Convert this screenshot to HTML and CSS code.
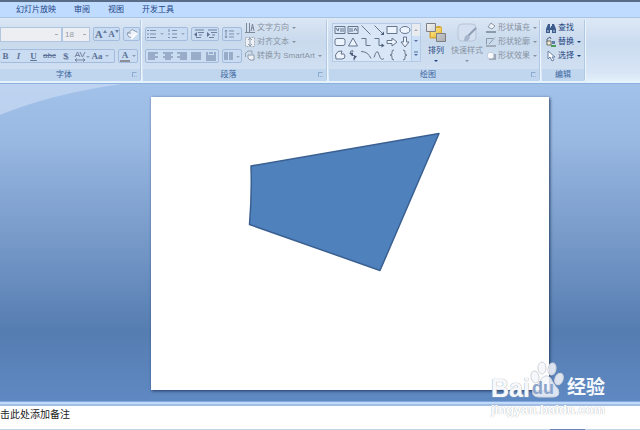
FILE: index.html
```html
<!DOCTYPE html>
<html lang="zh-CN">
<head>
<meta charset="utf-8">
<title>演示文稿</title>
<link rel="stylesheet" href="styles.css">
</head>
<body>
<div class="app">
  <nav class="tabs">
    <a href="#show">幻灯片放映</a>
    <a href="#review">审阅</a>
    <a href="#view">视图</a>
    <a href="#dev">开发工具</a>
  </nav>

  <div class="ribbon">
    <section class="group group-font">
      <div class="body rows">
        <div class="row">
          <div class="fields">
            <select class="font-name" aria-label="字体"><option></option></select>
            <select class="font-size" aria-label="字号"><option>18</option></select>
          </div>
          <div class="pill w28">
            <button class="serif big" aria-label="增大字号">A<svg width="4" height="8" viewBox="0 0 4 8"><path d="M0 3 2 0l2 3z" fill="#6b82a8"/></svg></button>
            <button class="serif" aria-label="减小字号">A<svg width="4" height="8" viewBox="0 0 4 8"><path d="M0 0h4L2 3z" fill="#6b82a8"/></svg></button>
          </div>
          <div class="pill w17">
            <button aria-label="清除格式"><svg width="14" height="12" viewBox="0 0 14 12"><path d="M2 6 7 1.500 12 4 8 10 4 9Z" fill="#eef3fa" stroke="#8c9bb5"/><path d="M6 11 12 5" stroke="#fff" stroke-width="2"/><path d="M2 5h4" stroke="#8292b0"/></svg></button>
          </div>
        </div>
        <div class="row">
          <div class="pill pill-left">
            <button class="serif w11">B</button>
            <button class="serif w15 italic">I</button>
            <button class="serif w15 under">U</button>
            <button class="w17 strike">abc</button>
            <button class="serif w15 shade">S</button>
            <button class="w17 spacing" aria-label="字符间距"><svg width="16" height="11" viewBox="0 0 16 11"><path d="M1 6 3.500 1 6 6M2 4.500h3M6 1 8.500 6 11 1M1 9h10M3 7.500 1 9l2 1.500M9 7.500 11 9 9 10.500" fill="none" stroke="#7384a4"/><path d="M12 5h4l-2 2z" fill="#8fa0bb"/></svg></button>
            <button class="serif w20">Aa<i class="caret"></i></button>
          </div>
          <div class="pill w20">
            <button class="serif color" aria-label="字体颜色"><b>A</b><i class="caret"></i></button>
          </div>
        </div>
      </div>
      <h2>字体<i class="launch"></i></h2>
    </section>

    <section class="group group-para">
      <div class="body para">
        <div class="rows">
          <div class="row">
            <div class="pill w43">
              <button aria-label="项目符号"><svg width="20" height="10" viewBox="0 0 20 10"><path d="M1 1.500h2M1 5h2M1 8.500h2M4 1.500h6M4 5h6M4 8.500h6" stroke="#7b8ead"/><path d="M14 4h4l-2 2z" fill="#9aa9c2"/></svg></button>
              <button aria-label="编号"><svg width="20" height="10" viewBox="0 0 20 10"><path d="M2 0v3M1 5h2M1 8.500h2M5 1.500h5M5 5h5M5 8.500h5" stroke="#7b8ead"/><path d="M14 4h4l-2 2z" fill="#9aa9c2"/></svg></button>
            </div>
            <div class="pill w28">
              <button aria-label="减少缩进"><svg width="12" height="10" viewBox="0 0 12 10"><path d="M2 1h9M5 3.500h6M6 6h3M3 8.500h5" stroke="#6e809f"/><path d="M4 3 1 5.500 4 8z" fill="#5d7193"/></svg></button>
              <button aria-label="增加缩进"><svg width="12" height="10" viewBox="0 0 12 10"><path d="M2 1h9M5 3.500h6M6 6h3M3 8.500h5" stroke="#6e809f"/><path d="M1 3 4 5.500 1 8z" fill="#5d7193"/></svg></button>
            </div>
            <div class="pill w20">
              <button aria-label="行距"><svg width="16" height="10" viewBox="0 0 16 10"><path d="M5 2h5M5 5h5M5 8h5M2 1v8M1 2.500 2 1 3 2.500M1 7.500 2 9 3 7.500" fill="none" stroke="#7b8ead"/><path d="M12 4h4l-2 2z" fill="#9aa9c2"/></svg></button>
            </div>
          </div>
          <div class="row">
            <div class="pill w74">
              <button aria-label="左对齐"><svg width="10" height="9" viewBox="0 0 10 9"><path d="M0 1h10M0 3h7M0 5h10M0 7h7" stroke="#687ca0"/></svg></button>
              <button aria-label="居中"><svg width="10" height="9" viewBox="0 0 10 9"><path d="M0 1h10M2 3h6M0 5h10M2 7h6" stroke="#687ca0"/></svg></button>
              <button aria-label="右对齐"><svg width="10" height="9" viewBox="0 0 10 9"><path d="M0 1h10M3 3h7M0 5h10M3 7h7" stroke="#687ca0"/></svg></button>
              <button aria-label="两端对齐"><svg width="10" height="9" viewBox="0 0 10 9"><path d="M0 1h10M0 3h10M0 5h10M0 7h10" stroke="#687ca0"/></svg></button>
              <button aria-label="分散对齐"><svg width="10" height="9" viewBox="0 0 10 9"><path d="M1 0v3M9 0v3M3 1h4M0 4h10M0 6h10M0 8h10" stroke="#687ca0"/></svg></button>
            </div>
            <div class="pill w20">
              <button aria-label="分栏"><svg width="16" height="9" viewBox="0 0 16 9"><path d="M0 1h4M0 3h4M0 5h4M0 7h4M5 1h4M5 3h4M5 5h4M5 7h4" stroke="#687ca0"/><path d="M12 4h4l-2 2z" fill="#9aa9c2"/></svg></button>
            </div>
          </div>
        </div>
        <div class="stack off">
          <button><svg width="10" height="12" viewBox="0 0 10 12"><path d="M1.500 1v9M4.500 1v9M0 10.500h10" stroke="#7c8797"/><path d="M6 9 7.500 2 9 9M6 6h3" fill="none" stroke="#7c8797"/></svg>文字方向<i class="caret"></i></button>
          <button><svg width="10" height="12" viewBox="0 0 10 12"><path d="M.5 1.500h9v9h-9z" fill="#eef2f7" stroke="#a3adba" stroke-dasharray="2 1"/><path d="M5 2v8M3 4 5 2 7 4M3 8 5 10 7 8" fill="none" stroke="#929dac"/></svg>对齐文本<i class="caret"></i></button>
          <button><svg width="10" height="12" viewBox="0 0 10 12"><path d="M1 3 3 1h4v3M.5 3v4" fill="none" stroke="#98a3b2"/><path d="M3 5h6v5H5L3 8z" fill="#f2f4f8" stroke="#8c98a8"/></svg>转换为 SmartArt<i class="caret"></i></button>
        </div>
      </div>
      <h2>段落<i class="launch"></i></h2>
    </section>

    <section class="group group-draw">
      <div class="body draw">
        <div class="gallery">
          <div class="shapes">
            <button aria-label="文本框"><svg viewBox="0 0 12 12"><path d="M1 2.500h10v7H1z"/><path d="M2 4 4 7 5 4M6 5h4M6 7h4" /></svg></button>
            <button aria-label="垂直文本框"><svg viewBox="0 0 12 12"><path d="M1 2.500h10v7H1z"/><path d="M3 4v4M5 4v4M7 7 8.500 4 10 7"/></svg></button>
            <button aria-label="直线"><svg viewBox="0 0 12 12"><path d="M1.500 1.500 10.500 10.500"/></svg></button>
            <button aria-label="箭头"><svg viewBox="0 0 12 12"><path d="M1.500 1.500 10 10"/><path class="solid" d="M11 11V7.500L7.500 11z"/></svg></button>
            <button aria-label="矩形"><svg viewBox="0 0 12 12"><path class="fill" d="M1 2.500h10v7H1z"/></svg></button>
            <button aria-label="椭圆"><svg viewBox="0 0 12 12"><ellipse class="fill" cx="6" cy="6" rx="5" ry="3.500"/></svg></button>
            <button aria-label="圆角矩形"><svg viewBox="0 0 12 12"><rect class="fill" x="1" y="2.500" width="10" height="7" rx="2"/></svg></button>
            <button aria-label="三角形"><svg viewBox="0 0 12 12"><path class="fill" d="M6 2 10.500 10h-9z"/></svg></button>
            <button aria-label="肘形连接符"><svg viewBox="0 0 12 12"><path d="M1.500 2.500H6v7h4.500"/></svg></button>
            <button aria-label="肘形箭头"><svg viewBox="0 0 12 12"><path d="M1.500 2.500H6v7h4"/><path class="solid" d="M11.500 9.500 8.500 7.500v4z"/></svg></button>
            <button aria-label="右箭头"><svg viewBox="0 0 12 12"><path class="fill" d="M1 4.500h5V2l5 4-5 4V7.500H1z"/></svg></button>
            <button aria-label="下箭头"><svg viewBox="0 0 12 12"><path class="fill" d="M4.500 1v5H2l4 5 4-5H7.500V1z"/></svg></button>
            <button aria-label="任意多边形"><svg viewBox="0 0 12 12"><path class="fill" d="M2 10 1.500 6 4 2.500 8 2 7 5q4-1 4 2t-3 3z"/></svg></button>
            <button aria-label="自由曲线"><svg viewBox="0 0 12 12"><path d="M3 2.500q5-2 2 1t2 3q3 0 0 2l0 3M3 3l3 4"/><path class="solid" d="M2 4h4v3zM7 7h3L7 11z"/></svg></button>
            <button aria-label="弧形"><svg viewBox="0 0 12 12"><path d="M1 2.500q7 0 10 7"/></svg></button>
            <button aria-label="曲线"><svg viewBox="0 0 12 12"><path d="M1 8.500q3-10 5-3t5 4"/></svg></button>
            <button aria-label="左大括号"><svg viewBox="0 0 12 12"><path d="M8 1Q5.500 1 6 3.500T4 6q2.500 0 2 2.500T8 11"/></svg></button>
            <button aria-label="右大括号"><svg viewBox="0 0 12 12"><path d="M4 1q2.500 0 2 2.500T8 6q-2.500 0-2 2.500T4 11"/></svg></button>
          </div>
          <div class="scroller">
            <button aria-label="上一行"><svg width="6" height="4" viewBox="0 0 6 4"><path d="M1 3h4L3 1z" fill="#a6aebb"/></svg></button>
            <button aria-label="下一行"><svg width="6" height="4" viewBox="0 0 6 4"><path d="M1 1h4L3 3z" fill="#526f9e"/></svg></button>
            <button aria-label="其他"><svg width="6" height="6" viewBox="0 0 6 6"><path d="M1 1h4" stroke="#526f9e"/><path d="M1 3h4L3 5z" fill="#526f9e"/></svg></button>
          </div>
        </div>
        <button class="large arrange">
          <svg width="22" height="20" viewBox="0 0 22 20"><defs><linearGradient id="grey" x2="1" y2="1"><stop stop-color="#f4f4f4"/><stop offset="1" stop-color="#a9abae"/></linearGradient><linearGradient id="gold" x2="1" y2="1"><stop stop-color="#fff09c"/><stop offset="1" stop-color="#e9b52c"/></linearGradient></defs><path d="M11.500 3.500h4v4M5 9v6h6" fill="url(#gold)" stroke="#d5a433"/><path d="M5.500 4.500h11v10h-11z" fill="url(#gold)" stroke="#d8aa3c"/><path d="M1.500.5h9v8h-9zM11.500 10.500h9v8h-9z" fill="url(#grey)" stroke="#7d7f84"/></svg>
          <span>排列</span><i class="caret"></i>
        </button>
        <button class="large off">
          <svg width="22" height="20" viewBox="0 0 22 20"><rect x="2" y="1" width="18" height="17" rx="4" fill="#d4e0f0" stroke="#b6c5da"/><path d="M20 5 11 14" stroke="#8d9db6" stroke-width="2"/><path d="M12 12q-4 0-4 6 5 1 6-4z" fill="#a7b6cc"/></svg>
          <span>快速样式</span><i class="caret"></i>
        </button>
        <div class="stack off">
          <button><svg width="10" height="12" viewBox="0 0 10 12"><path d="M2 5 5 1 9 4 6 7z" fill="#eef1f5" stroke="#8d98a8"/><path d="M0 9h10v2H0z" fill="#8e9aaa"/></svg>形状填充<i class="caret"></i></button>
          <button><svg width="10" height="12" viewBox="0 0 10 12"><path d="M7 2.500H.5v6M3 8 9 1.500" fill="none" stroke="#8d98a8"/><path d="M0 9h10v2H0z" fill="#a2adba"/></svg>形状轮廓<i class="caret"></i></button>
          <button><svg width="10" height="12" viewBox="0 0 10 12"><path d="M3 9h6V4" fill="none" stroke="#9ba6b7" stroke-width="2"/><rect x="1.500" y="2.500" width="6" height="6" rx="2" fill="#f8fafc" stroke="#c2cbd7"/></svg>形状效果<i class="caret"></i></button>
        </div>
      </div>
      <h2>绘图<i class="launch"></i></h2>
    </section>

    <section class="group group-edit">
      <div class="body edit">
        <div class="stack">
          <button><svg width="10" height="12" viewBox="0 0 10 12"><path d="M2 2h2v3l1 1V4h1V2h2l2 5v4H6V8H4v3H0V7z" fill="#3d5c8e"/><path d="M1 9h2M7 9h2" stroke="#c4d5eb"/></svg>查找</button>
          <button><svg width="10" height="12" viewBox="0 0 10 12"><path d="M1 6V3l3-2 1 2" fill="none" stroke="#55677e"/><path d="M1 5h4v4H1z" fill="#f3edda" stroke="#716f61"/><path d="M6 5h3v3H6z" fill="#617ca9"/><path d="M5 9h5v2H5z" fill="#4d9b5c"/></svg>替换<i class="caret"></i></button>
          <button><svg width="10" height="12" viewBox="0 0 10 12"><path d="M2 1v8l2-2 2 4 2-1-2-3h3z" fill="#fff" stroke="#6880a5"/></svg>选择<i class="caret"></i></button>
        </div>
      </div>
      <h2>编辑</h2>
    </section>
  </div>

  <main class="workspace">
    <svg class="sheen" viewBox="0 0 120 31" preserveAspectRatio="none" aria-hidden="true"><path d="M0 0h120Q50 10 0 31z" fill="#d3e1f6" fill-opacity=".55"/></svg>
    <div class="slide">
      <svg viewBox="0 0 398 293" role="img" aria-label="四边形"><path d="M100 69 288 36.500 229 173.500 98.500 127.500Q101 98 100 69Z" fill="#4f81bd" stroke="#3a6091" stroke-width="1.500" stroke-linejoin="round"/></svg>
    </div>
  </main>
  <div class="splitter"></div>
  <div class="notes">击此处添加备注</div>
  <div class="status"><span></span></div>

  <div class="watermark">
    <svg class="paw" width="36" height="40" viewBox="0 0 36 40" aria-hidden="true"><g fill="#f4f6fa" fill-opacity=".85" stroke="#d0d4da"><ellipse cx="6" cy="16" rx="4" ry="6" transform="rotate(-12 6 16)"/><ellipse cx="13" cy="7" rx="4" ry="6"/><ellipse cx="23" cy="8" rx="4" ry="6" transform="rotate(10 23 8)"/><ellipse cx="30" cy="18" rx="4" ry="6" transform="rotate(22 30 18)"/><path d="M16 15q5-1 7 5 3 5 6 8 3 8-5 8H10q-8 0-6-8 2-3 6-6 2-6 6-7z"/></g></svg>
    <div class="brand"><span>Bai</span><span class="du">du</span><span class="cn">经验</span></div>
    <div class="url">jingyan.baidu.com</div>
  </div>
</div>
</body>
</html>
```
FILE: styles.css
```css
* { box-sizing: border-box; }

body {
  margin: 0;
  font: 8px/12px "Liberation Sans", "Noto Sans CJK SC", sans-serif;
  color: #1f457f;
}

button, select {
  font: inherit;
  color: inherit;
  border: 0;
  padding: 0;
  margin: 0;
  background: none;
}

svg { display: block; flex: none; }

.app {
  position: relative;
  display: flex;
  flex-direction: column;
  min-height: 100vh;
  overflow: hidden;
}

.tabs {
  display: flex;
  gap: 18px;
  height: 17px;
  padding: 2px 16px 0;
  border-top: 2px solid #586c88;
  background: #bfdbff;
}

.tabs a { color: #1c4586; text-decoration: none; }

/* Ribbon */
.ribbon {
  display: flex;
  gap: 2px;
  height: 67px;
  padding: 2px 0;
  border-top: 1px solid #a9c3e3;
  border-bottom: 1px solid #8cb0df;
  background: linear-gradient(#dce8f6, #cbdcf0 40%, #d8e6f6 85%, #e6f4fd);
}

.group {
  display: flex;
  flex-direction: column;
  flex: none;
  border-right: 1px solid #afc8e4;
  border-radius: 0 0 2px 2px;
  background: linear-gradient(#d9e5f3, #c9daed 35%, #d3e2f3);
  box-shadow: 1px 0 #eef5fd;
}

.group-font { width: 141px; }
.group-para { width: 184px; }
.group-draw { width: 211px; }
.group-edit { width: 43px; }

.group h2 {
  position: relative;
  margin: 0;
  padding-right: 12px;
  font: inherit;
  text-align: center;
  color: #3d659f;
  background: #bfd6ee;
}

.group-edit h2 { padding-right: 0; }

.launch {
  position: absolute;
  right: 3px;
  top: 3px;
  width: 5px;
  height: 5px;
  border: 1px solid #8ca9ce;
  border-right-color: transparent;
  border-bottom-style: dotted;
}

.body { flex: 1; }

.rows {
  display: flex;
  flex-direction: column;
  gap: 8px;
  padding-top: 7px;
}

.row { display: flex; gap: 3px; height: 14px; }

.pill {
  display: flex;
  align-items: center;
  justify-content: space-around;
  border: 1px solid #a3bcdd;
  border-radius: 2px;
  background: #c9dcf1;
}

.pill button { display: flex; align-items: center; justify-content: center; }
.pill-left { justify-content: flex-start; width: 115px; border-left: 0; }

.fields { display: flex; width: 90px; }

.fields select {
  appearance: none;
  height: 15px;
  border: 1px solid #b0c5df;
  color: #949ba5;
  background: #eceef1 linear-gradient(#a1a9b4, #a1a9b4) no-repeat right 3px center / 3px 1px;
}

.font-name { width: 62px; }
.font-size { width: 28px; padding-left: 2px; }

.serif { font-family: "Liberation Serif", serif; font-weight: bold; font-size: 9px; color: #5c7196; }
.big { font-size: 11px; }
.italic { font-style: italic; }
.under { text-decoration: underline; }
.strike { text-decoration: line-through; color: #5c7196; }
.shade { text-shadow: 1px 1px #8ca0c0; }
.color b { line-height: 9px; border-bottom: 2px solid #8d8d98; padding: 0 2px; }

.w11 { width: 11px; }
.w15 { width: 15px; }
.w17 { width: 17px; }
.w20 { width: 20px; }
.w28 { width: 28px; }
.w43 { width: 43px; }
.w74 { width: 74px; }

.caret {
  flex: none;
  width: 0;
  border: 2px solid transparent;
  border-top-color: currentColor;
  border-bottom: 0;
  margin-left: 3px;
}

.serif .caret { margin-left: 2px; opacity: .6; }

.para { display: flex; gap: 3px; padding-left: 2px; }
.draw { display: flex; padding-left: 3px; }
.edit { padding-left: 4px; }

.stack { padding-top: 1px; }

.stack button {
  display: flex;
  align-items: center;
  gap: 2px;
  height: 14px;
  white-space: nowrap;
}

.stack .caret { margin-left: 1px; }

.off { color: #8792a2; }

/* Shape gallery */
.gallery {
  display: flex;
  height: 39px;
  margin-top: 3px;
  border: 1px solid #b5cae5;
  background: #d8e6f7;
}

.shapes { display: grid; grid-template-columns: repeat(6, 13px); }
.shapes button { display: grid; place-items: center; }
.shapes svg { width: 12px; height: 12px; fill: none; stroke: #65758c; }
.shapes .fill { fill: #edf4fd; }
.shapes .solid { fill: #4a5c77; stroke: none; }

.scroller { display: grid; width: 9px; border-left: 1px solid #b5cae5; }
.scroller button { display: grid; place-items: center; background: #cbdff6; }
.scroller button:first-child { background: #e9ebee; }

.large {
  display: flex;
  flex-direction: column;
  align-items: center;
  width: 32px;
  padding-top: 3px;
}

.large span { margin: 2px 0 3px; white-space: nowrap; }
.large .caret { margin: 0; }
.arrange { width: 30px; }
.draw .stack { margin-left: 3px; }

/* Editing area */
.workspace {
  position: relative;
  flex: 1;
  padding: 13px 91px 11px 151px;
  background: linear-gradient(#a3c2ea, #99b8e2 18%, #567db1 78%, #5f89c3);
}

.sheen { position: absolute; left: 0; top: 0; width: 19%; height: 31px; }

.slide { background: #fff; box-shadow: 1px 1px 3px #233d63; }
.slide svg { width: 100%; height: auto; }

.splitter {
  height: 5px;
  border-top: 1px solid #80a7dc;
  border-bottom: 2px solid #a2bfe3;
  background: #c1dafb;
}

.notes {
  height: 23px;
  padding-top: 3px;
  font-size: 10px;
  color: #222;
  background: #fff;
}

.status { display: flex; height: 2px; background: #c5d4e5; }
.status span { width: 35px; margin-left: 86%; background: #6983bd; }

/* Watermark over the lower right corner */
.watermark {
  position: absolute;
  right: 35px;
  bottom: 14px;
  width: 114px;
  height: 56px;
  font-weight: bold;
}

.paw { position: absolute; left: 38px; top: 0; }

.brand {
  position: relative;
  display: flex;
  align-items: center;
  height: 30px;
  margin-top: 12px;
  font-size: 25px;
  line-height: 30px;
  color: #f6f8fb;
  text-shadow: 0 0 1px #a5acb7, 0 0 1px #b9c0ca;
}

.du { margin-left: 2px; font-size: 18px; color: #89a3ca; text-shadow: none; }
.cn { margin-left: auto; font-size: 19px; text-shadow: none; }

.url {
  font-size: 13px;
  line-height: 14px;
  color: #fff;
  text-shadow: 0 0 1px #b4b9c1, 0 0 1px #c9cdd3;
}
```
